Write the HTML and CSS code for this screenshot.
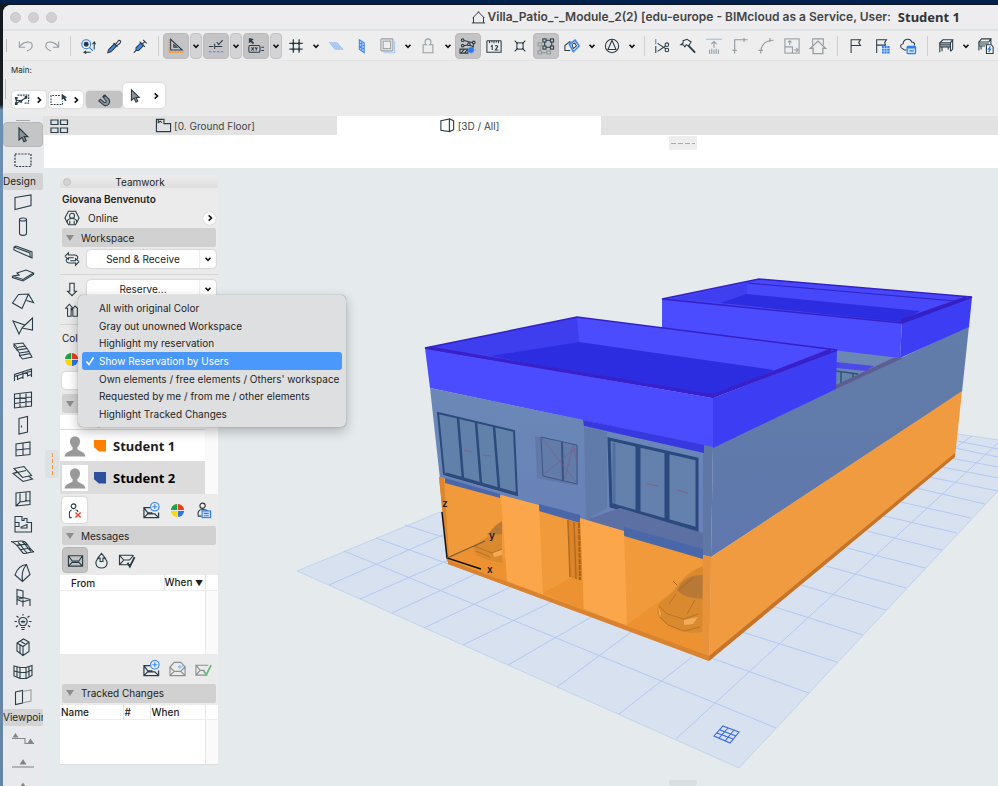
FILE: index.html
```html
<!DOCTYPE html>
<html lang="en">
<head>
<meta charset="utf-8">
<title>Villa_Patio_-_Module_2(2)</title>
<link rel="stylesheet" href="styles.css">
</head>
<body>
<svg class="defs" aria-hidden="true">
  <symbol id="chev-down" viewBox="0 0 10 10"><path d="M2.5 3.8 5 6.4 7.5 3.8"/></symbol>
  <symbol id="chev-right" viewBox="0 0 10 10"><path d="M3.7 2.3 6.5 5 3.7 7.7"/></symbol>
  <symbol id="cursor" viewBox="0 0 18 18"><path d="M5 2v12l3-2.6 2 4.4 2.2-1-2-4.2h3.6z" fill="#8d9296"/></symbol>
  <symbol id="pie" viewBox="0 0 18 18"><g stroke="none"><path d="M8.6 8.6V2a7 7 0 0 0-6.600 6.600z" fill="#1da345"/><path d="M9.400 8.600V2a7 7 0 0 1 6.600 6.600z" fill="#f23c20"/><path d="M8.600 9.400H2a7 7 0 0 0 6.600 6.600z" fill="#fbd90a"/><path d="M9.400 9.400H16a7 7 0 0 1-6.600 6.600z" fill="#2a78e8"/></g></symbol>
  <symbol id="mail-new" viewBox="0 0 18 18"><path d="M8 6H1v10.500h15.500v-5.500M1 16.500l4-4h7.500l4 4M1 6l4 5.500h5" stroke-width="1.300"/><g stroke="#3f87f5"><circle cx="12.500" cy="5" r="4.500" fill="#e6f0ff"/><path d="M12.500 2.500v5M10 5h5"/></g></symbol>
  <symbol id="bust" viewBox="0 0 24 24"><path d="M12 1.500c-4 0-5.800 2.800-5.400 6 .2 2.500 1.300 4.500 2.800 5.800v2.200C7.500 18 1.500 17.500.500 23.500h23c-1-6-7-5.500-8.900-8v-2.200c1.500-1.300 2.600-3.300 2.800-5.800.4-3.200-1.400-6-5.400-6z" fill="#999" stroke="none"/></symbol>
</svg>
<div class="window">
  <header class="titlebar">
    <div class="lights"><i></i><i></i><i></i></div>
    <h1 class="title">
      <svg class="ico" viewBox="0 0 18 18"><path d="M3 15.500V8.500M15 15.500V8.500M1 15.500h16M2 9.500 9 2.500l7 7M8 2.500h2"/></svg>
      <span>Villa_Patio_-_Module_2(2) [edu-europe - BIMcloud as a Service, User:</span>
      <strong>Student 1</strong>
    </h1>
  </header>

  <nav class="toolbar" aria-label="Standard">
    <i class="grip"></i>
    <button class="tb dim" aria-label="Undo"><svg class="ico" viewBox="0 0 18 18"><path d="M1.500 4v6.500H8M1.500 10.500C5 4 16 2 16 8.500c0 3-2.500 5-6 6"/></svg></button>
    <button class="tb dim" aria-label="Redo"><svg class="ico" viewBox="0 0 18 18"><path d="M16.500 4v6.500H10M16.500 10.500C13 4 2 2 2 8.500c0 3 2.500 5 6 6"/></svg></button>
    <i class="sep"></i>
    <button class="tb" aria-label="Find and Select"><svg class="ico" viewBox="0 0 18 18"><circle cx="7" cy="7" r="5" stroke="#2f7df0"/><circle cx="7" cy="7" r="2.200" fill="#26363f"/><path d="m10.500 10.500 4 4" stroke="#2f7df0"/><path d="M16 13V5m-2 2 2-2.500L17.500 7M12 16H5m2-1.500L4.500 16 7 17.500"/></svg></button>
    <button class="tb" aria-label="Pick Up Parameters"><svg class="ico" viewBox="0 0 18 18"><path d="M2 16.500 3 13 9.500 6.500 12 9l-6.500 6.500z" fill="#3f87f5"/><path d="m8.500 5.500 4.500 4.500M10.500 7.500l4-5 2 1-.5 2-4 3.500z" fill="#f2f2f2"/></svg></button>
    <button class="tb" aria-label="Inject Parameters"><svg class="ico" viewBox="0 0 18 18"><path d="m2 16.500 3-3M4.500 14v-3L10 5.500l3 3L7.500 14z" fill="#3f87f5"/><path d="m8.500 4 6 6M11.500 7l3-3M12.500 2l4 4"/></svg></button>
    <i class="sep"></i>
    <button class="tb on" aria-label="Guide Lines"><svg class="ico" viewBox="0 0 18 18"><path d="M3 1.500v12h13z"/><path d="M6.500 7.500V10.500H10z"/><path d="M1.500 1v15H17.500" stroke="#ff8c1a" stroke-width="1.500" stroke-dasharray="2 1"/></svg></button><button class="dd on" aria-label="Guide Line options"><svg class="chev"><use href="#chev-down"/></svg></button>
    <button class="tb on" aria-label="Snap Guides"><svg class="ico" viewBox="0 0 18 18"><path d="M1 9.500h5M8 9.500h8M7.500 6.500v6M10 4.500l2 3 4.500-5"/><path d="M1 15.500h16" stroke="#3f87f5" stroke-dasharray="3 1.500"/></svg></button><button class="dd on" aria-label="Snap Guide options"><svg class="chev"><use href="#chev-down"/></svg></button>
    <button class="tb on" aria-label="Tracker"><svg class="ico" viewBox="0 0 18 18"><path d="M1 0v6l2-1.500 2.500 2.500 1.500-1.500L4.500 3 6.500 1z" fill="#2b3d47" stroke="none"/><rect x="1" y="8.500" width="12.500" height="7.500" rx="1.500"/><path d="m4 10.500 2.500 3.500m0-3.500L4 14m4-3.500 1.300 1.700 1.300-1.700m-1.300 1.700V14M15 10.500h3M15 14h3" /></svg></button><button class="dd on" aria-label="Tracker options"><svg class="chev"><use href="#chev-down"/></svg></button>
    <button class="tb" aria-label="Grid Snap"><svg class="ico" viewBox="0 0 18 18"><path d="M6 1.500v15M12.500 1.500v15M1.500 6h15M1.500 12.500h15" stroke-width="1.400"/><path d="M5 6h2m4.500 0h2M5 12.500h2m4.500 0h2" stroke-width="3"/></svg></button><button class="dd" aria-label="Grid options"><svg class="chev"><use href="#chev-down"/></svg></button>
    <button class="tb lightblue" aria-label="Editing Plane"><svg class="ico" viewBox="0 0 18 18"><path d="M2 5.500h8l6.500 7H8zM4 7.800h8.500M6 10h8.500M4.700 5.500l6.300 7M7.400 5.500l6.300 7"/></svg></button>
    <button class="tb blue" aria-label="Vertical Plane"><svg class="ico" viewBox="0 0 18 18"><path d="m6 2 5.500 3.500v11L6 12.500zM8.700 3.800v10.700M6 5.500l5.500 3.500M6 9l5.500 3.500" fill="#bcd5fb"/></svg></button>
    <button class="tb dim" aria-label="Trace"><svg class="ico" viewBox="0 0 18 18"><path d="M4 16.500h12.500V4" stroke="#5d9cf8"/><rect x="1" y="1" width="13.500" height="13.500" rx="1"/><rect x="3.500" y="3.500" width="8.500" height="8.500"/></svg></button><button class="dd" aria-label="Trace options"><svg class="chev"><use href="#chev-down"/></svg></button>
    <button class="tb dim" aria-label="Gravity"><svg class="ico" viewBox="0 0 18 18"><path d="M7 7.500C4 5 6 1 9 1S14 5 11 7.500h3.500v9h-11v-9z"/></svg></button><button class="dd" aria-label="Gravity options"><svg class="chev"><use href="#chev-down"/></svg></button>
    <button class="tb on" aria-label="Suspend Groups"><svg class="ico" viewBox="0 0 18 18"><path d="M3.500 2.500 15 5.500v5L10.500 7.500 3 9" stroke-width="1.300"/><g fill="#c4c4c6"><circle cx="3" cy="2.500" r="1.500"/><circle cx="15.500" cy="5" r="1.500"/><circle cx="3" cy="8.500" r="1.500"/><circle cx="10" cy="7" r="1.500"/></g><path d="M0 12.500h9v4.500H0zM1 17l4-4.500M5 17l4-4.500"/><path d="M12.500 9v9M8.500 13.500h9M9.500 10.500l6 6M15.500 10.500l-6 6" stroke="#6da4f8"/><circle cx="12.500" cy="13.500" r="3" fill="#2878f0" stroke="none"/></svg></button>
    <button class="tb" aria-label="Measure"><svg class="ico" viewBox="0 0 18 18"><path d="M1 3v13h16V3M1 3h16M4 3v3M6.600 3v2M9 3v3M11.600 3v2M14 3v3"/><path d="M5.500 9.500 7 8.500v5M10.500 9.500c.5-1.500 3-1 2.500.5L10.500 13.500H14"/></svg></button>
    <button class="tb" aria-label="Snap Point"><svg class="ico" viewBox="0 0 18 18"><rect x="5.500" y="5.500" width="7" height="7"/><path d="m3 3 3.500 3.500M15 3l-3.500 3.500M3 15l3.500-3.500M15 15l-3.500-3.500"/></svg></button>
    <button class="tb on" aria-label="Edit Group"><svg class="ico" viewBox="0 0 18 18"><path d="M2.500 7v9.500H12v-2" stroke="#96999b" stroke-width="1.300"/><path d="M0 5.500h4v3.500H0zM0 14.500h4V18H0zM10 14.500h4V18h-4z" fill="#c4c4c6" stroke="#96999b"/><path d="M7.500 2.500h8v8h-8z"/><g fill="#c4c4c6"><rect x="5.500" y="1" width="3.500" height="3.500"/><rect x="14" y="1" width="3.500" height="3.500"/><rect x="5.500" y="9" width="3.500" height="3.500"/><rect x="14" y="9" width="3.500" height="3.500"/></g></svg></button>
    <button class="tb" aria-label="Renovation"><svg class="ico" viewBox="0 0 18 18"><path d="M7 14H1V8.500L6.500 4l2 1.500"/><path d="m6 7 6.500-4.500 4.500 6.500-6.500 6.500z" stroke="#3f87f5" stroke-width="1.800" fill="#fff"/><path d="m9 7.500 3-2 2 3.500-3.500 3z"/></svg></button><button class="dd" aria-label="Renovation options"><svg class="chev"><use href="#chev-down"/></svg></button>
    <button class="tb" aria-label="Orientation"><svg class="ico" viewBox="0 0 18 18"><circle cx="9" cy="9" r="7.500"/><path d="m9 2.500 4.500 10.500h-9z"/></svg></button><button class="dd" aria-label="Orientation options"><svg class="chev"><use href="#chev-down"/></svg></button>
    <i class="sep"></i>
    <button class="tb" aria-label="Split"><svg class="ico" viewBox="0 0 18 18"><path d="M2 1v6" stroke="#3f87f5"/><path d="M2 9v8M4 6l9 6M4 15l9-6"/><circle cx="14.500" cy="7.500" r="2"/><circle cx="14.500" cy="13.500" r="2"/></svg></button>
    <button class="tb" aria-label="Adjust"><svg class="ico" viewBox="0 0 18 18"><path d="m1 7.500 2.500-2V3L8 1.500l4.500 3L9.500 9 7 7.500 5.500 10 3.500 7.500z"/><path d="m9.500 8.500 7.500 8" stroke-width="2.200"/></svg></button>
    <button class="tb dim" aria-label="Elevate"><svg class="ico" viewBox="0 0 18 18"><path d="M0 1.500h18" stroke="#5d9cf8" stroke-width="1.500"/><path d="M9 11V4M6 7l3-3 3 3M4 13v5M6.500 12v6M9 13v5M11.500 12v6M14 13v5"/></svg></button>
    <button class="tb dim" aria-label="Intersect"><svg class="ico" viewBox="0 0 18 18"><path d="M3 17.500V2h14.500M13.500 0v4.500M.500 14h5" stroke-width="1.300"/></svg></button>
    <button class="tb dim" aria-label="Fillet"><svg class="ico" viewBox="0 0 18 18"><path d="M3 17.500C3 9 7 2.500 17.500 2.500M13.500 0v4.500M.500 14h5" stroke-width="1.300"/></svg></button>
    <button class="tb dim" aria-label="Resize"><svg class="ico" viewBox="0 0 18 18"><rect x="1" y="1" width="16" height="16"/><path d="M1 10h8.500v7M6.500 8V3M4.500 5l2-2 2 2M11 13.500h5M14 11.500l2 2-2 2"/></svg></button>
    <button class="tb dim" aria-label="Home Story"><svg class="ico" viewBox="0 0 18 18"><path d="M3 8V1h12v7"/><path d="M.500 11.500 9 3.500l8.500 8h-3v6h-11v-6z" stroke-width="1.500"/></svg></button>
    <i class="sep wide"></i>
    <button class="tb" aria-label="Issue"><svg class="ico" viewBox="0 0 18 18"><path d="M3.500 17V2H14l-2 3.200 2 3.300H3.500"/></svg></button>
    <button class="tb" aria-label="Issue Organizer"><svg class="ico" viewBox="0 0 18 18"><path d="M3 17V2h11l-2 3 1 3H3"/><path d="M9 9h8.500v8.500H9z" fill="#2f7df0" stroke="none"/><path d="M9 11.800h8.500M9 14.700h8.500M11.500 9v8.500M14.500 9v8.500" stroke="#dbe8fd" stroke-width=".8"/></svg></button>
    <button class="tb" aria-label="BIMcloud"><svg class="ico" viewBox="0 0 18 18"><path d="M7 13.500H5l-1.500-1C-.5 11 0 7 3.500 6.500 4 0 12 0 13 4.500c3 0 4 2 3 4"/><rect x="8" y="9.500" width="9.500" height="8" rx="1" fill="#cfe1fd" stroke="#2f7df0" stroke-width="1.400"/><path d="M8 11h9.500M10.500 14.500h5" stroke="#2f7df0" stroke-width="1.500"/></svg></button>
    <i class="sep wide"></i>
    <button class="tb" aria-label="3D Element"><svg class="ico" viewBox="0 0 18 18"><path d="M2 5.500 5.500 2h11L14 5.500zM2 5.500V16M14 5.500V15M16.500 2v10.500M2 10h12M4.500 15v-5M2 7.700h12M14 15l2.500-2.500M11.500 13v-3"/></svg></button><button class="dd" aria-label="3D Element options"><svg class="chev"><use href="#chev-down"/></svg></button>
    <button class="tb" aria-label="3D Document"><svg class="ico" viewBox="0 0 18 18"><path d="M1 4.500 4 1h10.500L12 4.500zM1 4.500V14M1 9h7M3.500 13V9M1 6.700h11M14.500 1v6"/><path d="M9.500 7.500h5.500l2 2.500v7.500H9.500z" fill="#fff"/><path d="m14 9.500-2 3h2l-2 3.500" stroke="#2f7df0" stroke-width="1.600"/></svg></button>
  </nav>

  <section class="infobox" aria-label="Info Box">
    <p>Main:</p>
    <div class="info-row">
      <i class="grip tall"></i>
      <button class="ib" aria-label="Geometry"><svg class="ico" viewBox="0 0 18 18"><path d="M4 3.500h12.500v9H12" stroke-dasharray="2 1"/><path d="M2.500 13.500V6M2.500 13l12-7M2 9.500h8" /><path d="M1 13h3M1 7h3M7 10.500h2M12 6h3" stroke-width="3"/></svg><svg class="chev"><use href="#chev-right"/></svg></button>
      <button class="ib" aria-label="Selection Method"><svg class="ico" viewBox="0 0 18 18"><path d="M10 4H0v10h13V10" stroke-dasharray="2 1.300"/><path d="M12 2v7l2-1.500 2 3 1.500-1-1.500-3h2.500z" fill="#2b3d47" stroke="none"/></svg><svg class="chev"><use href="#chev-right"/></svg></button>
      <button class="ib pressed" aria-label="Quick Selection"><svg class="ico" viewBox="0 0 18 18"><path d="m3 10 6 5c4 2 8-3 5.500-7L10 3.500 8 6l3.500 4c0 2-1.500 2-2.500 1.500L5 8z" fill="#8d9296"/><path d="m8 6 2-2.500" stroke-width="2.500"/></svg></button>
      <button class="ib big" aria-label="Arrow Tool"><svg class="ico"><use href="#cursor"/></svg><svg class="chev"><use href="#chev-right"/></svg></button>
    </div>
  </section>

  <div class="main">
    <aside class="toolbox" aria-label="Toolbox">
      <i class="handle"></i>
      <button class="tool on" aria-label="Arrow"><svg class="ico"><use href="#cursor"/></svg></button>
      <button class="tool marquee" aria-label="Marquee"><svg class="ico" viewBox="0 0 18 18"><rect x="1" y="3" width="16" height="12.500" stroke-dasharray="2 1.200" stroke-width="1.200"/></svg></button>
      <h2>Design</h2>
      <div class="tools">
        <button aria-label="Wall"><svg class="ico" viewBox="0 0 18 18"><path d="M1 4.500 17 2v10.500L1 16.500z"/></svg></button>
        <button aria-label="Column"><svg class="ico" viewBox="0 0 18 18"><path d="M5.500 1.500v14c0 2.500 7 2.500 7 0v-14"/><ellipse cx="9" cy="1.500" rx="3.500" ry="1.500"/></svg></button>
        <button aria-label="Beam"><svg class="ico" viewBox="0 0 18 18"><path d="m0 4 2-1L18 9v6L0 7zM0 4l16 6v4"/></svg></button>
        <button aria-label="Slab"><svg class="ico" viewBox="0 0 18 18"><path d="m5 8-2-2 9-3 7.500 3L9 12.500 -1.500 9z"/><path d="M-1.500 9v1.500L9 14l10.500-6.500V6"/></svg></button>
        <button aria-label="Roof"><svg class="ico" viewBox="0 0 18 18"><path d="m4.500 2.500 10-.500L8 16.500-1.500 11zM14.500 2l5 8.500-7-2"/></svg></button>
        <button aria-label="Shell"><svg class="ico" viewBox="0 0 18 18"><path d="m-1 4 12 4L18.500 1v12L8 11l-3 6zM11 8 8 11"/></svg></button>
        <button aria-label="Stair"><svg class="ico" viewBox="0 0 18 18"><path d="m0 2 9-1 2 3-8 1.500zM3 5.500V8l10-1.500-2-2.500M3 8l2.500 3 9.500-1.500-2-3M5.500 11v2.500l10.500-2-1-2M5.500 13.500 8.500 17l9.500-2-2-3.500M0 2v2.500l3 3.500"/></svg></button>
        <button aria-label="Railing"><svg class="ico" viewBox="0 0 18 18"><path d="M.500 15V8.500l17-5.500v8M.500 10.500 17.500 5M9 6v7M3.500 9v4.500L9 11M13.500 5.500V10l4-1.500"/></svg></button>
        <button aria-label="Curtain Wall"><svg class="ico" viewBox="0 0 18 18"><path d="m.500 3 17-2v14l-17 2zM6 2.500v14M12 1.800v14M.500 7.500l17-1.500M.500 12.500l17-2"/></svg></button>
        <button aria-label="Door"><svg class="ico" viewBox="0 0 18 18"><path d="M5 2.500 13.500.500v15.500L5 18zM7.500 9.500v2"/></svg></button>
        <button aria-label="Window"><svg class="ico" viewBox="0 0 18 18"><path d="m2 4 14-2v12.500L2 16zM9 3v12.500M2 10l14-1.500"/></svg></button>
        <button aria-label="Skylight"><svg class="ico" viewBox="0 0 18 18"><path d="m0 3.500 10-2 7.500 9-9 2zM3 7l-4 1.500 10 8 9.500-2.500-4-3M-1 8.500l13-3"/></svg></button>
        <button aria-label="Opening"><svg class="ico" viewBox="0 0 18 18"><path d="m2 3 14-1.500v13L2 16zM6 2.500V12l-4 4M6 12l10-1.500M12 2v9"/></svg></button>
        <button aria-label="Zone"><svg class="ico" viewBox="0 0 18 18"><path d="M1 1.500h7v4h2v-2h3v4h4.500v9.500H1zM1 7.500h4v4H1M7 13h6V9.500L7 12z"/></svg></button>
        <button aria-label="Mesh"><svg class="ico" viewBox="0 0 18 18"><path d="M-3 2.500c7 1 10-2 14 .500 3 2 5 8 9 10-4-1-8 3-11 1-3-3-6-10-12-11.500zM4 3.500c4 3 6 8 9 10.500M8 2.500c4 2.500 6 8 9 9.500M2 6c5 1 8-2 12-.500M5.500 10.500c4 0 7-2 11-.500"/></svg></button>
        <button aria-label="Morph"><svg class="ico" viewBox="0 0 18 18"><path d="M1 11C3 5 7 1 12.500.500L16 10.500 8.500 17.500zM8.500 17.500C7.500 11 8.500 5 12.500.500"/></svg></button>
        <button aria-label="Object"><svg class="ico" viewBox="0 0 18 18"><path d="M3 .500 9 2v7L3 7.500zM3 7.500V16M9 10.500v7M3 10.500l6 2.500 7-2.500V17M9 9l-6 1.500M9 8.500l7 2"/></svg></button>
        <button aria-label="Lamp"><svg class="ico" viewBox="0 0 18 18"><path d="M7 12.500C3 9 5 4.500 9 4.500s6 4.500 2 8zM7 14.500h4M7.500 16.500h3M9 1v1.500M2.500 3l2 1.500M15.500 3l-2 1.500M.500 8.500H3M15 8.500h2.500M2 14l2-1.500M16 14l-2-1.500M7 8l1 1.500L9 8l1 1.500L11 8"/></svg></button>
        <button aria-label="Equipment"><svg class="ico" viewBox="0 0 18 18"><path d="m3 5 6.500-4L15 4v9.500L9 17.500 3 13zM3 5l6 3.500L15 4M9 8.500v9M6 3l6 3.500M6 7v8"/></svg></button>
        <button aria-label="Panels"><svg class="ico" viewBox="0 0 18 18"><path d="m0 3 6 1.500h6L18 2.500v10L12.500 15.500H6L0 13zM6 4.500v11M12 4.500v11M0 8l6 1.500h6l6-2.500M3 3.700v10.500M15 3.500v10.500"/></svg></button>
        <button aria-label="Wall End"><svg class="ico" viewBox="0 0 18 18"><path d="m1.500 4 7-1.500V15l-7 1.500zM8.500 2.500V15"/><path d="M8.500 3.500 17 2v11l-8.500 2" stroke="#9a9da0"/></svg></button>
      </div>
      <h2>Viewpoint</h2>
      <div class="tools views">
        <button aria-label="Section"><svg class="ico" viewBox="0 0 18 18"><path d="M-2 6.500h13v5h9"/><path d="m-.500 5 2-3 2 3zM14.500 10.500l2-3 2 3z" fill="#777" /></svg></button>
        <button aria-label="Elevation"><svg class="ico" viewBox="0 0 18 18"><path d="M-2 12h22"/><path d="m6.500 9 2.500-4 2.500 4z" fill="#777"/></svg></button>
        <button aria-label="Interior Elevation"><svg class="ico" viewBox="0 0 18 18"><path d="m7 8.500 2-3 2 3zM0 11h18" fill="#777"/></svg></button>
      </div>
    </aside>

    <div class="content">
      <nav class="tabs" aria-label="Views">
        <button class="overview" aria-label="Tab Overview"><svg class="ico" viewBox="0 0 18 18"><path d="M1 3h7v4.500H1zM10.500 3h7v4.500h-7zM1 11h7v4.500H1zM10.500 11h7v4.500h-7z" stroke-width="1.200"/></svg></button>
        <button class="tab"><svg class="ico" viewBox="0 0 18 18"><path d="M1.500 2.500h8v4.500h7V15.500h-15zM3.500 2.500v3.500l2-1.500 2 1.500"/></svg>[0. Ground Floor]</button>
        <button class="tab active"><svg class="ico" viewBox="0 0 18 18"><path d="M2 4 11 2v13.500L2 14zM11 2l4.500 2v9.500L11 15.500"/></svg>[3D / All]</button>
      </nav>
      <div class="strip"></div>
      <div class="canvas">
        <svg class="scene" viewBox="44 168 954 618" preserveAspectRatio="xMinYMin slice" role="img" aria-label="3D view of the villa">
          <defs>
            <linearGradient id="front" x1="0" y1="0" x2="0" y2="1"><stop offset="0" stop-color="#6b88b6"/><stop offset="1" stop-color="#6880ba"/></linearGradient>
            <linearGradient id="side" x1="0" y1="0" x2="0" y2="1"><stop offset="0" stop-color="#627da8"/><stop offset="1" stop-color="#5f77ae"/></linearGradient>
          </defs>
          <path d="M297 571 440 512 958 434 1040 446 739 768z" fill="#d7e1ef" stroke="#b9cbea" stroke-width=".7"/>
          <g stroke="#b4c8f2" stroke-width="1" fill="none">
            <path d="M344 551 776 728M376 538 809 693M405 525 837 662M775 607 863 635M801 585 886 610M826 566 906 588M847 548 925 568M867 531 942 550M884 516 957 533M901 502 971 518M916 488 985 504M929 477 998 491M942 467 998 478M950 458 998 467M955 448 998 457M957 441 998 449"/>
            <path d="M676 739 998 443M619 714 692 657M557 687 642 624M508 665 600 612M463 645 560 598M424 628 517 584M392 613 478 573M360 599 449 560M329 585 445 534M955 448 972 436"/>
          </g>
          <!-- side elevation -->
          <path d="M713 446 969 326 962 392 711 557z" fill="url(#side)"/>
          <path d="M711 557 962 391 955 457 709 661z" fill="#f09b40"/>
          <path d="M709 656 955 453V457L709 661z" fill="#c4752b"/>
          <!-- patio gap -->
          <path d="M836 350 903 357 836 388z" fill="#6a88b3"/>
          <path d="M836 362 874 366 866 371 836 368z" fill="#4c49e8"/>
          <path d="M836 371 858 374 836 386z" fill="#6485a8"/>
          <path d="M836 371 858 374M841 372V383M853 373V378" stroke="#30527e" stroke-width="1.500"/>
          <path d="M893 358H903L836 389V385z" fill="#5d5c93"/>
          <!-- rear roof -->
          <path d="M662 299 902 323 900 358 662 330z" fill="#4b4bff"/>
          <path d="M902 323 972 297 969 327 900 358z" fill="#3d3df3"/>
          <path d="M662 299 759 279 972 297 902 323z" fill="#4848fb"/>
          <path d="M672 299 747 283V294L722 303z" fill="#3f3ff0"/>
          <path d="M720 303 747 294 920 311 901 322z" fill="#2c2ce0"/>
          <path d="M662 299 759 279 972 297 902 323z" fill="none" stroke="#3420c4" stroke-width="1.500"/>
          <path d="M747 283 955 301" stroke="#3420c4"/>
          <path d="M901 321 966 298" stroke="#3420c4" stroke-width="3"/>
          <!-- front roof -->
          <path d="M577 317 837 350 713 398 425 348z" fill="#4c4cff"/>
          <path d="M425 348 577 317 579 342 490 356z" fill="#3e3eee"/>
          <path d="M490 356 579 342 774 370 713 398z" fill="#2c2ce0"/>
          <path d="M425 348 713 398V448L430 388z" fill="#4b4bff"/>
          <path d="M713 398 837 350 836 389 713 448z" fill="#3d3df3"/>
          <path d="M425 348 577 317 837 350 713 397z" fill="none" stroke="#3420c4" stroke-width="1.500"/>
          <path d="M430 348 713 396 831 350" fill="none" stroke="#3a20c8" stroke-width="3"/>
          <!-- front elevation -->
          <path d="M430 388 584 420 585 426 703 450V558L440 479z" fill="url(#front)"/>
          <path d="M703 445 713 447 711 557 703 556z" fill="#5e77a5"/>
          <path d="M583 420 704 445V453L584 426z" fill="#3838df"/>
          <path d="M584 427 607 432V508L586 520z" fill="#607ba9"/>
          <path d="M438 413 514 431 517 495 444 474z" fill="#6180aa" stroke="#2c4a7c" stroke-width="2"/>
          <path d="M458 418 463 479M476 422 481 484M494 427 499 489" stroke="#2c4a7c" stroke-width="2.500"/>
          <path d="M446 474 517 494" stroke="#2c4a7c" stroke-width="3"/>
          <path d="M535 436 578 446V486L537 478z" fill="#6079a8"/>
          <path d="M541 437 577 445V484L543 476z" fill="#627ca9" stroke="#3f5783"/>
          <path d="M562 442 563 481" stroke="#3b5280" stroke-width="2"/>
          <path d="M543 475 577 447M542 438 576 482M565 479 573 445 577 462" fill="none" stroke="#775f86" stroke-width=".7"/>
          <path d="M609 439 697 459V531L611 506z" fill="#6381ac" stroke="#2b497e" stroke-width="3"/>
          <path d="M614 443 V505" stroke="#506ea1" stroke-width="3"/>
          <path d="M638 446V514M667 453V522" stroke="#2b497e" stroke-width="5"/>
          <path d="M611 505 696 529" stroke="#2b497e" stroke-width="4"/>
          <path d="M464 450 472 452M483 455 491 456M647 484 658 486M677 490 688 493" stroke="#80607e"/>
          <path d="M586 520 620 508 703 533V553L624 531z" fill="#5d70a4"/>
          <!-- ground floor -->
          <path d="M439 477 703 555 711 557 709 661 448 564z" fill="#f19a3b"/>
          <path d="M439 477 444 478 449 558 447 562z" fill="#dc862f"/>
          <path d="M448 558 486 542 507 560V582zM543 593 574 576 583 580V609zM626 625 703 570V654z" fill="#ec9231"/>
          <path d="M445 478 500 494V498L445 483zM539 504 580 515V523L539 511zM624 527 703 549V559L624 536z" fill="#4a67a9"/>
          <!-- cars -->
          <g fill="#d9892e">
            <path d="M474 551c-1-5 2-7 6-9 4-3 9-6 12-10 3-3 6-7 10-9v40l-5-1c-9-2-21-5-23-11z"/>
            <path d="M657 610c0-5 4-9 9-12 4-3 8-7 11-12 7-9 15-16 26-20v66l-12 1c-13-2-34-9-34-23z"/>
          </g>
          <path d="M495 526 502 521V534L487 535zM677 590c6-11 13-15 26-15v24c-10-1-20-2-26-9z" fill="#b97936"/>
          <path d="M474 546 492 553 502 549M476 551 490 557M659 606 667 614 684 619 698 614M660 617 668 625 684 631 700 627M676 594 669 604M695 600 687 614" fill="none" stroke="#bd7224"/>
          <path d="M493 553 502 550V555L494 557zM684 620 698 617 693 624 684 625zM658 607 661 613 660 617z" fill="#f4ab59"/>
          <path d="M694 577 679 590M673 581 677 585" stroke="#a86820"/>
          <!-- door and pillars -->
          <path d="M567 520 582 523V581L570 577z" fill="#dc8429"/>
          <path d="M568 520 570 577M574 522 576 579" stroke="#b36c1d" stroke-width="1.500"/><path d="M579 523 580 580" stroke="#a96318" stroke-dasharray="5 1" stroke-width="2"/>
          <path d="M501 495 539 505 543 595 507 581zM580 518 624 531 627 626 584 609z" fill="#fca64b"/>
          <path d="M703 555 711 557 709 661 702 656z" fill="#e8933b"/>
          <path d="M448 560 709 656V661L448 564z" fill="#d98330"/>
          <!-- axes -->
          <path d="M442 512 447 558 481 569" fill="none" stroke="#111" stroke-width="1.500"/>
          <path d="M447 558 485 541" stroke="#765b3d" stroke-width="1.200"/>
          <g class="axis"><text x="442" y="507">z</text><text x="489" y="539">y</text><text x="487" y="573">x</text></g>
          <path d="M723 726 739 732 730 743 714 736zM720 730 736 736M717 733 733 739M728 728 719 738M734 730 725 741" fill="none" stroke="#3568f0" stroke-width="1.100"/>
        </svg>

        <i class="dock left"></i>
        <i class="dock bottom"></i>

        <section class="palette" aria-label="Teamwork">
          <header><button class="close" aria-label="Close"></button><h2>Teamwork</h2></header>
          <p class="user">Giovana Benvenuto</p>
          <div class="row status">
            <svg class="ico" viewBox="0 0 18 18"><path d="M5 1.500h8l4 7.500-4 7.500H5L1 9z"/><circle cx="9" cy="6.500" r="2.800"/><path d="M3.500 14c0-6 11-6 11 0M6.500 12v4M11.500 12v4"/></svg>
            <span>Online</span>
            <button class="round" aria-label="Status"><svg class="chev"><use href="#chev-right"/></svg></button>
          </div>
          <button class="head">Workspace</button>
          <div class="row">
            <svg class="ico" viewBox="0 0 18 18"><path d="m1 6 4-4v2.500h7c4 0 4 4 2.500 5M1 6l4 3.500V7.500h6M17 12l-4 4v-2.500H6c-4 0-4-4-2.500-5M17 12l-4-3.500v2.500H7"/></svg>
            <span class="split"><button>Send &amp; Receive</button><button class="more" aria-label="Send options"><svg class="chev"><use href="#chev-down"/></svg></button></span>
          </div>
          <hr>
          <div class="row">
            <svg class="ico" viewBox="0 0 18 18"><path d="M6.500 2.500h5v9h2.500L9 16.500 4 11.500h2.500z"/></svg>
            <span class="split"><button>Reserve...</button><button class="more" aria-label="Reserve options"><svg class="chev"><use href="#chev-down"/></svg></button></span>
          </div>
          <div class="row release">
            <svg class="ico" viewBox="0 0 18 18"><path d="M4 16V7H2l4-4.500L10 7H8v9zM10 16V9H8.500l4-4.500L17 9h-2v7z"/></svg>
          </div>
          <hr>
          <p class="label">Coloring:</p>
          <div class="row pie"><svg class="ico"><use href="#pie"/></svg></div>
          <button class="field" aria-label="Coloring"></button>
          <button class="head" aria-label="Users"></button>
          <div class="list">
            <ul>
              <li class="cut"><svg class="ico"><use href="#pie"/></svg></li>
              <li><svg class="bust"><use href="#bust"/></svg><i class="tag orange"></i>Student 1</li>
              <li class="sel"><svg class="bust"><use href="#bust"/></svg><i class="tag navy"></i>Student 2</li>
            </ul>
          </div>
          <div class="actions users">
            <button class="raised" aria-label="Remove user"><svg class="ico" viewBox="0 0 18 18"><circle cx="8" cy="4.500" r="2.500"/><path d="M6 16.500H4C3 12 4 9 6 8.500M10 8.500c1.500 0 2.500 1 2.500 2"/><path d="m10 11 5.500 5.500M15.500 11 10 16.500" stroke="#f0412c" stroke-width="1.500"/></svg></button>
            <button aria-label="Message"><svg class="ico"><use href="#mail-new"/></svg></button>
            <button aria-label="User colors"><svg class="ico"><use href="#pie"/></svg></button>
            <button aria-label="User details"><svg class="ico" viewBox="0 0 18 18"><circle cx="8" cy="4" r="2.800"/><path d="M7 15H3.500C2.500 10 4 8 8 8s5 1 5.500 2"/><rect x="7.500" y="9.500" width="9" height="7" fill="#cfe1fd" stroke="#2f7df0"/><path d="M9.500 12h5M9.500 14.500h5" stroke="#2f7df0"/></svg></button>
          </div>
          <button class="head">Messages</button>
          <div class="actions modes">
            <button class="pressed" aria-label="Inbox"><svg class="ico" viewBox="0 0 18 18"><path d="M1.500 4h15v11h-15zM1.500 4l4 5.500h7l4-5.500M1.500 15l4-4h7l4 4" stroke-width="1.200"/></svg></button>
            <button aria-label="Actions"><svg class="ico" viewBox="0 0 18 18"><path d="M5.500 7c-4 3-3 10 3.500 10s7.500-7 3.500-10M7.500 10V6.500H5L9 1.500l4 5h-2.500V10z"/></svg></button>
            <button aria-label="Completed"><svg class="ico" viewBox="0 0 18 18"><path d="M12 13.500H.500v-10H15M.500 3.500 5 8.500h6l4.500-5M.500 13.500l4.500-5"/><path d="m9 11.500 2.500 4 5-10" stroke-width="2"/></svg></button>
          </div>
          <table class="messages">
            <thead><tr><th>From</th><th class="num">When <span>▼</span></th><th class="bar"></th></tr></thead>
            <tbody><tr><td></td><td></td><td class="bar"></td></tr></tbody>
          </table>
          <div class="actions mail">
            <button aria-label="New message"><svg class="ico"><use href="#mail-new"/></svg></button>
            <button class="faded" aria-label="Reply"><svg class="ico" viewBox="0 0 18 18"><path d="M1 16.500v-9L5.500 2.500h7L17 7v9.500zM1 7.500 5.500 12h7L17 7M1 16.500l4.500-4.500M17 16.500l-4.500-4.500"/><path d="M15 4.500c0 3-2 3-5 3m2-2-2 2 2 2" stroke="#8fb6f5"/></svg></button>
            <button class="faded" aria-label="Done"><svg class="ico" viewBox="0 0 18 18"><path d="M13 16H1V5.500h13M1 5.500 5.500 11H10M1 16l4.500-5"/><path d="m9 11.500 3 4 5-10" stroke="#63bb74" stroke-width="1.800"/></svg></button>
          </div>
          <button class="head">Tracked Changes</button>
          <table class="changes">
            <thead><tr><th class="name">Name</th><th class="no">#</th><th>When</th><th class="bar"></th></tr></thead>
            <tbody><tr><td></td><td></td><td></td><td class="bar"></td></tr></tbody>
          </table>

          <div class="menu" role="menu">
            <button role="menuitem">All with original Color</button>
            <button role="menuitem">Gray out unowned Workspace</button>
            <button role="menuitem">Highlight my reservation</button>
            <button role="menuitem" class="picked"><svg class="check" viewBox="0 0 10 10"><path d="M1.500 5.500 4 8.500 8.500 1.500"/></svg>Show Reservation by Users</button>
            <button role="menuitem">Own elements / free elements / Others' workspace</button>
            <button role="menuitem">Requested by me / from me / other elements</button>
            <button role="menuitem">Highlight Tracked Changes</button>
          </div>
        </section>
      </div>
      <i class="dock top"></i>
    </div>
  </div>
</div>
</body>
</html>
```

FILE: styles.css
```css
* { box-sizing: border-box; }
html, body { height: 100%; }
body {
  margin: 0;
  padding: 5px 0 0 3px;
  overflow: hidden;
  font: 10px/14px Inter, "Liberation Sans", sans-serif;
  color: #1e1e1e;
  background: linear-gradient(#02204d 3px, #111820 4px, #1c1f22 105px, #6c8fb2 110px, #6685a3);
}
h1, h2, p, ul { margin: 0; padding: 0; }
h2 { font-size: 10px; font-weight: 400; }
i { display: block; }
button { font: inherit; color: inherit; border: 0; padding: 0; margin: 0; background: none; }
.defs { position: absolute; width: 0; height: 0; }
.ico { width: 18px; height: 18px; flex: none; overflow: visible; fill: none; stroke: #2b3d47; stroke-width: 1.2; }
.chev { width: 10px; height: 10px; flex: none; fill: none; stroke: #111; stroke-width: 1.6; }
.dim { opacity: .45; }
.faded .ico { stroke: #8a9094; }
.blue .ico { stroke: #3f87f5; }
.lightblue .ico { stroke: #9cc1f7; }

.window { display: flex; flex-direction: column; height: 100%; overflow: hidden; border-radius: 8px 0 0 0; background: #ebebeb; }

.titlebar { position: relative; display: flex; align-items: center; height: 26px; padding-left: 7px; background: #ededef; border-bottom: 2px solid #e0e3e3; flex: none; }
.lights { display: flex; gap: 7px; }
.lights i { width: 11px; height: 11px; border-radius: 50%; background: #d0d0d2; border: 1px solid #c6c6c8; }
.title { display: flex; align-items: center; margin-left: auto; padding-right: 38px; color: #444; font-size: 12px; font-weight: 600; white-space: nowrap; }
.title .ico { width: 15px; height: 15px; margin-right: 2px; }
.title strong { margin-left: 7px; color: #333; font: 700 13px/18px "Noto Sans", sans-serif; }

.toolbar { display: flex; align-items: center; height: 30px; padding-left: 3px; border-bottom: 1px solid #e3e3e3; background: #eee; flex: none; }
.grip { width: 7px; height: 13px; border-left: 1px solid #bbb; flex: none; }
.grip.tall { height: 20px; }
.tb { display: flex; align-items: center; justify-content: center; width: 26px; height: 26px; border-radius: 4px; flex: none; }
.tb .ico { width: 16px; height: 16px; }
.tb.on { background: #c4c4c6; border: 1px solid #b9b9bb; }
.dd { display: flex; align-items: center; justify-content: center; width: 12px; height: 26px; margin: 0 1px; border-radius: 4px; flex: none; }
.dd.on { background: #d4d4d6; border: 1px solid #c2c2c4; }
.sep { width: 10px; height: 20px; flex: none; background: linear-gradient(#cfcfcf, #cfcfcf) center / 1px 100% no-repeat; }
.sep.wide { width: 12px; }

.infobox { height: 55px; padding: 3px 0 0 2px; flex: none; }
.infobox p { padding-left: 6px; font-size: 8px; line-height: 12px; }
.info-row { display: flex; align-items: flex-end; gap: 3px; padding-top: 7px; }
.info-row .grip { align-self: flex-start; width: 4px; margin-top: -4px; }
.ib { display: flex; align-items: center; justify-content: space-around; width: 34px; height: 17px; border-radius: 4px; background: #fff; box-shadow: 0 0 2px #0003; }
.ib .ico { width: 16px; height: 16px; }
.ib.pressed { width: 36px; background: #c3c3c3; }
.ib.big { width: 42px; height: 25px; }
.info-row .pressed { margin-right: -2px; }

.main { display: flex; flex: 1; min-height: 0; }
.toolbox { display: flex; flex-direction: column; align-items: stretch; width: 40px; background: #e7e9ec; overflow: hidden; flex: none; }
.handle { width: 14px; height: 1px; margin: 4px auto 1px 13px; background: #aaa; flex: none; }
.tool { display: flex; align-items: center; justify-content: center; height: 25px; flex: none; }
.tool.on { background: #c4c5c7; border: 1px solid #b7b7b9; border-radius: 4px; }
.toolbox h2 { height: 17px; line-height: 17px; border-radius: 2px; background: #d2d3d4; white-space: nowrap; overflow: hidden; flex: none; }
.tool.marquee { height: 26px; }
.tools { display: grid; grid-auto-rows: 1fr; height: 519px; flex: none; }
.tools button { display: flex; align-items: center; justify-content: center; min-height: 0; }
.tools .ico { width: 18px; height: 18px; stroke-width: 1.1; }
.tools.views { height: 72px; padding-top: 3px; }
.tools.views .ico { stroke: #888; }

.content { position: relative; display: flex; flex-direction: column; flex: 1; min-width: 0; }
.tabs { display: flex; height: 19px; padding-left: 1px; background: #e2e2e2; flex: none; }
.overview { display: flex; align-items: center; justify-content: center; width: 29px; }
.tab { display: flex; align-items: center; justify-content: center; gap: 2px; width: 264px; color: #444; }
.tab.active { background: #fff; }
.tab .ico { width: 17px; height: 17px; }
.strip { height: 33px; margin-left: 1px; background: #fff; flex: none; }
.canvas { position: relative; flex: 1; min-height: 0; padding-left: 1px; background: #e5ebed; overflow: hidden; }
.scene { display: block; width: 100%; height: 100%; }
.axis { font: 600 10px Inter, sans-serif; fill: #222; }
.dock { position: absolute; border-radius: 2px; background: #e9ebec; }
.dock.top { left: 626px; top: 20px; width: 28px; height: 14px; background: repeating-linear-gradient(90deg, #f49b42 0 5px, #ededed 5px 7px) 2px 7px / 24px 1px no-repeat #ededed; }
.dock.left { left: 2px; top: 282px; width: 14px; height: 28px; background: repeating-linear-gradient(#f49b42 0 4px, #dde1e3 4px 6px) 7px 3px / 1px 23px no-repeat #dde1e3; }
.dock.bottom { left: 626px; bottom: 0; width: 28px; height: 6px; background: #dadfe1; }

.palette { position: absolute; left: 17px; top: 7px; width: 158px; background: #ebebeb; }
.palette header { display: flex; align-items: center; height: 13px; background: linear-gradient(#ececec, #dedede); }
.palette header h2 { flex: 1; padding-right: 11px; text-align: center; }
.close { width: 8px; height: 8px; margin: 0 2px 0 3px; border-radius: 50%; background: #d3d3d3; border: 1px solid #c4c4c4; }
.user { height: 20px; padding: 4px 2px 0; font-weight: 600; }
.row { display: flex; align-items: center; height: 21px; padding: 0 2px 0 4px; gap: 6px; }
.row .ico { width: 16px; height: 16px; }
.status { height: 20px; gap: 8px; }
.round { display: flex; align-items: center; justify-content: center; width: 13px; height: 13px; margin-left: auto; border-radius: 50%; background: #fff; box-shadow: 0 0 1px #0005; }
.head { display: flex; align-items: center; width: calc(100% - 4px); height: 19px; margin: 0 2px; border-radius: 2px; background: #d1d1d1; text-align: left; }
.head::before { content: ""; width: 0; height: 0; margin: 0 7px 0 4px; border: 4px solid transparent; border-top: 6px solid #8d8d8d; border-bottom: 0; }
.head + .row { height: 23px; }
.split { display: flex; flex: 1; height: 18px; margin-left: 1px; border-radius: 4px; background: #fff; box-shadow: 0 0 2px #0004; }
.split button:first-child { flex: 1; }
.split .more { display: flex; align-items: center; justify-content: center; width: 17px; border-left: 1px solid #eee; }
hr { width: 100%; height: 1px; margin: 4px 0 3px; border: 0; background: #d4d4d4; }
.release { height: 21px; }
.label { height: 20px; padding: 3px 2px 0; }
.row.pie { padding-left: 3px; height: 22px; }
.row.pie .ico { width: 17px; height: 17px; }
.field { display: block; width: calc(100% - 4px); height: 17px; margin: 2px 2px 5px; border-radius: 4px; background: #fff; box-shadow: 0 0 2px #0004; }
.list { margin-top: 2px; padding-right: 13px; background: #fafafa; }
.list ul { list-style: none; }
.list li { display: flex; align-items: center; height: 32px; padding-left: 2px; border-bottom: 1px solid #ddd; background: #fff; font: 700 13px/18px "Noto Sans", sans-serif; }
.list .cut { height: 15px; padding-left: 31px; }
.cut .ico { width: 14px; height: 14px; }
.list .sel { background: #dcdcdc; color: #000; }
.bust { width: 26px; height: 26px; padding: 2px; flex: none; background: #fff; }
.tag { width: 12px; height: 12px; margin: 0 7px 0 6px; clip-path: polygon(0 0, 100% 0, 100% 100%, 40% 100%, 0 65%); }
.orange { background: #ff8000; }
.navy { background: #2d509c; }
.actions { display: flex; align-items: center; justify-content: flex-end; }
.actions button { display: flex; align-items: center; justify-content: center; width: 26px; height: 26px; border-radius: 4px; }
.actions .ico { width: 17px; height: 17px; }
.users { height: 32px; padding: 0 2px; }
.actions .raised { width: 25px; margin-right: auto; background: #fff; box-shadow: 0 0 2px #0004; }
.modes { justify-content: flex-start; height: 30px; padding-left: 2px; }
.actions .pressed { background: #c3c3c3; border: 1px solid #b7b7b7; }
.mail { height: 30px; padding: 0 2px; }
table { width: 100%; border-collapse: collapse; table-layout: fixed; background: #fff; }
th { height: 15px; padding: 0; font-weight: 500; line-height: 14px; text-align: left; border-right: 1px solid #e4e4e4; border-bottom: 1px solid #eee; }
th.bar { border-right: 0; }
td { padding: 0; }
.bar { width: 13px; }
td.bar { background: #fafafa; border-left: 1px solid #e8e8e8; }
.messages th:first-child { padding-left: 11px; }
.messages .num { width: 41px; white-space: nowrap; }
.num span { font-size: 8px; }
.messages td { height: 63px; }
.changes { margin-top: 2px; border-bottom: 1px solid #ddd; }
.changes th { padding-left: 1px; }
.changes .name { width: 63px; }
.changes .no { width: 27px; }
.changes td { height: 45px; }

.menu { position: absolute; left: 18px; top: 120px; display: grid; grid-auto-rows: 1fr; width: 268px; height: 132px; padding: 4px; border-radius: 5px; background: #dedfe1; box-shadow: 0 0 1px #0008, 0 4px 12px #0004; }
.menu button { position: relative; display: flex; align-items: center; min-height: 0; padding-left: 17px; border-radius: 3px; text-align: left; white-space: nowrap; }
.menu .picked { background: #4b98fc; color: #fff; }
.check { position: absolute; left: 3px; top: 4px; width: 10px; height: 10px; fill: none; stroke: #fff; stroke-width: 1.5; }
```
